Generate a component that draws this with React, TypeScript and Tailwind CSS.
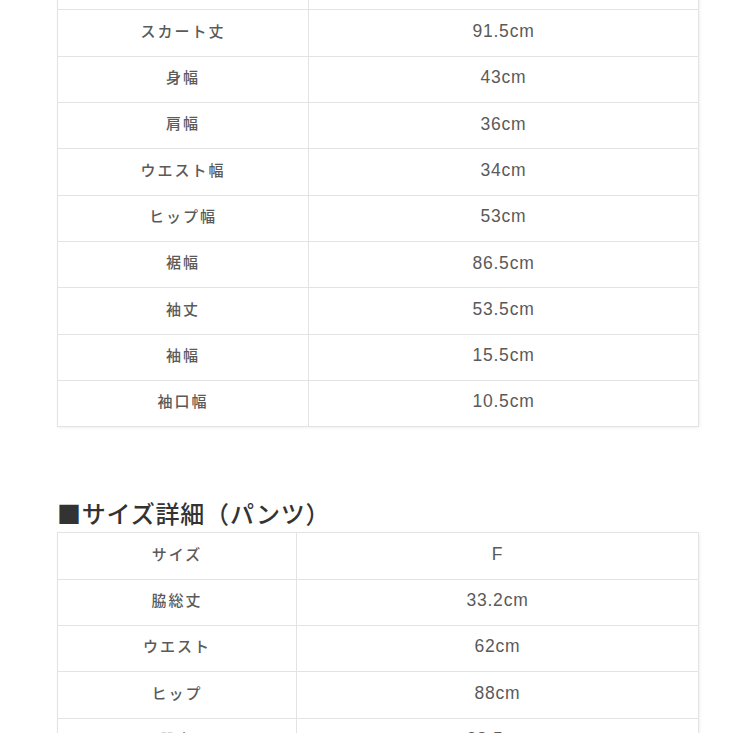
import React from "react";

const top: [string, string][] = [
  ["", ""],
  ["スカート丈", "91.5cm"],
  ["身幅", "43cm"],
  ["肩幅", "36cm"],
  ["ウエスト幅", "34cm"],
  ["ヒップ幅", "53cm"],
  ["裾幅", "86.5cm"],
  ["袖丈", "53.5cm"],
  ["袖幅", "15.5cm"],
  ["袖口幅", "10.5cm"],
];

const bottom: [string, string][] = [
  ["サイズ", "F"],
  ["脇総丈", "33.2cm"],
  ["ウエスト", "62cm"],
  ["ヒップ", "88cm"],
  ["股上", "28.5cm"],
];

const jp = "font-['Noto_Sans_CJK_JP','Noto_Sans',sans-serif]";
const num = "font-['Liberation_Sans','Noto_Sans_CJK_JP',sans-serif]";

function Row({ label, value, cols }: { label: string; value: string; cols: string }) {
  return (
    <div className={`grid ${cols} h-[46.33px] border-b border-[#e3e3e3]`}>
      <div
        className={`flex items-center justify-center pb-[4px] border-r border-[#e3e3e3] ${jp} text-[15px] tracking-[2px] font-medium text-[#5a5a5a]`}
      >
        {label}
      </div>
      <div
        className={`flex items-center justify-center pb-[4px] ${num} text-[17.5px] tracking-[0.8px] text-[#5a5a5a]`}
      >
        {value}
      </div>
    </div>
  );
}

export default function App() {
  return (
    <div className="w-[733px] h-[733px] overflow-hidden bg-white">
      <div className="ml-[57px] w-[642px] mt-[-37px]">
        <div className="border-t border-l border-r border-[#e3e3e3] shadow-[1px_1px_3px_rgba(0,0,0,0.06)]">
          {top.map(([l, v], i) => (
            <Row key={i} label={l} value={v} cols="grid-cols-[251px_1fr]" />
          ))}
        </div>
        <div
          className={`mt-[70px] h-[32px] flex items-center ${jp} text-[24px] font-medium text-[#333] tracking-[0.8px]`}
        >
          ■サイズ詳細（パンツ）
        </div>
        <div className="mt-[3px] border-t border-l border-r border-[#e3e3e3] shadow-[1px_1px_3px_rgba(0,0,0,0.06)]">
          {bottom.map(([l, v], i) => (
            <Row key={i} label={l} value={v} cols="grid-cols-[239px_1fr]" />
          ))}
        </div>
      </div>
    </div>
  );
}
